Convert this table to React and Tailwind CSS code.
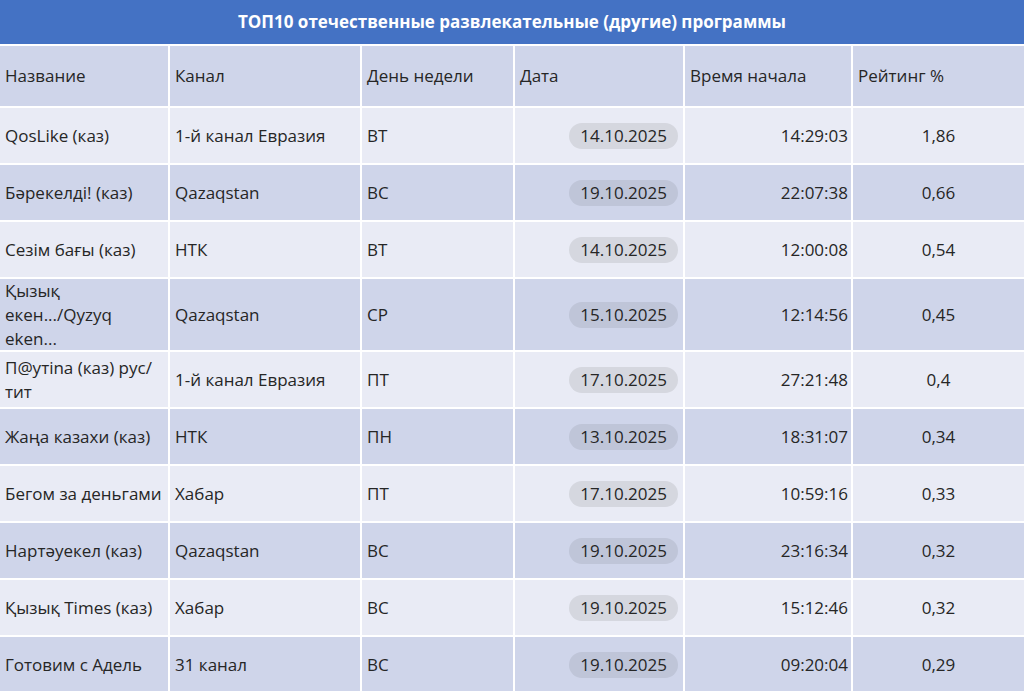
const rows = [
  { name: 'QosLike (каз)', channel: '1-й канал Евразия', day: 'ВТ', date: '14.10.2025', time: '14:29:03', rating: '1,86' },
  { name: 'Бәрекелді! (каз)', channel: 'Qazaqstan', day: 'ВС', date: '19.10.2025', time: '22:07:38', rating: '0,66' },
  { name: 'Сезім бағы (каз)', channel: 'НТК', day: 'ВТ', date: '14.10.2025', time: '12:00:08', rating: '0,54' },
  { name: ['Қызық', 'екен.../Qyzyq', 'eken...'], channel: 'Qazaqstan', day: 'СР', date: '15.10.2025', time: '12:14:56', rating: '0,45', tall: true },
  { name: ['П@утina (каз) рус/', 'тит'], channel: '1-й канал Евразия', day: 'ПТ', date: '17.10.2025', time: '27:21:48', rating: '0,4' },
  { name: 'Жаңа казахи (каз)', channel: 'НТК', day: 'ПН', date: '13.10.2025', time: '18:31:07', rating: '0,34' },
  { name: 'Бегом за деньгами', channel: 'Хабар', day: 'ПТ', date: '17.10.2025', time: '10:59:16', rating: '0,33' },
  { name: 'Нартәуекел (каз)', channel: 'Qazaqstan', day: 'ВС', date: '19.10.2025', time: '23:16:34', rating: '0,32' },
  { name: 'Қызық Times (каз)', channel: 'Хабар', day: 'ВС', date: '19.10.2025', time: '15:12:46', rating: '0,32' },
  { name: 'Готовим с Адель', channel: '31 канал', day: 'ВС', date: '19.10.2025', time: '09:20:04', rating: '0,29' },
]

const headers = ['Название', 'Канал', 'День недели', 'Дата', 'Время начала', 'Рейтинг %']

export default function App() {
  return (
    <div className="w-[1024px] h-[691px] overflow-hidden bg-white text-[#262626] font-['Open_Sans',sans-serif]">
      <div className="h-[44px] bg-[#4472c4] flex items-center justify-center text-white font-bold text-[17px]">
        ТОП10 отечественные развлекательные (другие) программы
      </div>
      <div className="mt-[2px] grid grid-cols-[168px_190px_151px_168px_166px_171px] gap-[2px] text-[17px]">
        {headers.map(h => (
          <div key={h} className="h-[60px] bg-[#cfd5ea] flex items-center px-[5px]">{h}</div>
        ))}
        {rows.map((r, i) => {
          const bg = i % 2 === 0 ? 'bg-[#e9ebf5]' : 'bg-[#cfd5ea]'
          const pill = i % 2 === 0 ? 'bg-[#d5d7df]' : 'bg-[#bfc5d8]'
          const h = r.tall ? 'h-[71px]' : 'h-[55px]'
          return [
            <div key={i + 'n'} className={`${bg} ${h} flex flex-col justify-center px-[5px] leading-[24px] whitespace-nowrap`}>
              {Array.isArray(r.name) ? r.name.map(l => <span key={l}>{l}</span>) : r.name}
            </div>,
            <div key={i + 'c'} className={`${bg} ${h} flex items-center px-[5px]`}>{r.channel}</div>,
            <div key={i + 'd'} className={`${bg} ${h} flex items-center px-[5px]`}>{r.day}</div>,
            <div key={i + 't'} className={`${bg} ${h} flex items-center justify-end pr-[5px]`}>
              <span className={`${pill} rounded-full h-[26px] px-[11px] flex items-center`}>{r.date}</span>
            </div>,
            <div key={i + 's'} className={`${bg} ${h} flex items-center justify-end pr-[3px]`}>{r.time}</div>,
            <div key={i + 'r'} className={`${bg} ${h} flex items-center justify-center`}>{r.rating}</div>,
          ]
        })}
      </div>
    </div>
  )
}
